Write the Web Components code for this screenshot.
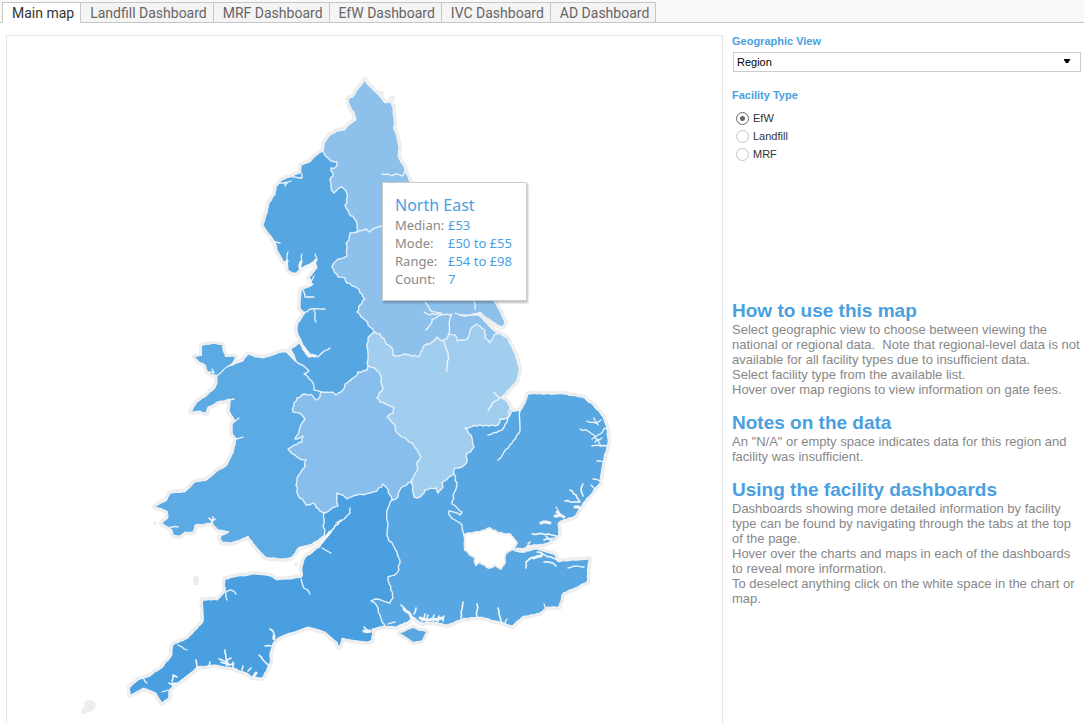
<!DOCTYPE html>
<html lang="en">
<head>
<meta charset="utf-8">
<title>Gate fees dashboard</title>
<style>
	body{ margin:0; background:#fff; font-family:"Liberation Sans", Arial, sans-serif; }
</style>
</head>
<body>
<gate-fee-page>
	<tab-strip slot="tabs">
		<tab-item selected>Main map</tab-item>
		<tab-item>Landfill Dashboard</tab-item>
		<tab-item>MRF Dashboard</tab-item>
		<tab-item>EfW Dashboard</tab-item>
		<tab-item>IVC Dashboard</tab-item>
		<tab-item>AD Dashboard</tab-item>
	</tab-strip>
	<region-map slot="map">
		<map-tooltip heading="North East" median="£53" mode="£50 to £55" range="£54 to £98" count="7"></map-tooltip>
	</region-map>
	<filter-select slot="side" label="Geographic View" options="Region,National"></filter-select>
	<filter-radios slot="side" label="Facility Type" options="EfW,Landfill,MRF"></filter-radios>
	<help-notes slot="side">
		<help-section heading="How to use this map">
			<div>Select geographic view to choose between viewing the national or regional data.&nbsp; Note that regional-level data is not available for all facility types due to insufficient data.</div>
			<div>Select facility type from the available list.</div>
			<div>Hover over map regions to view information on gate fees.</div>
		</help-section>
		<help-section heading="Notes on the data">
			<div>An "N/A" or empty space indicates data for this region and facility was insufficient.</div>
		</help-section>
		<help-section heading="Using the facility dashboards">
			<div>Dashboards showing more detailed information by facility type can be found by navigating through the tabs at the top of the page.</div>
			<div>Hover over the charts and maps in each of the dashboards to reveal more information.</div>
			<div>To deselect anything click on the white space in the chart or map.</div>
		</help-section>
	</help-notes>
</gate-fee-page>

<script>
class GateFeePage extends HTMLElement{
	constructor(){
		super();
		this.attachShadow({mode:'open'}).innerHTML = `
			<style>
				:host{ display:flex; flex-direction:column; height:100vh; overflow:hidden; }
				main{
					flex:1;
					min-height:0;
					display:grid;
					grid-template-columns:minmax(0, 1fr) 349px;
					gap:9px;
					padding:12px 3px 0 6px;
				}
				aside{ min-width:0; }
			</style>
			<slot name="tabs"></slot>
			<main>
				<slot name="map"></slot>
				<aside><slot name="side"></slot></aside>
			</main>
		`;
	}
}
customElements.define('gate-fee-page', GateFeePage);

class TabStrip extends HTMLElement{
	constructor(){
		super();
		this.attachShadow({mode:'open'}).innerHTML = `
			<style>
				:host{ display:block; padding-top:2px; background:#f9f9f9; }
				nav{ display:flex; height:21px; padding-left:2px; box-shadow:inset 0 -1px #c6c6c6; }
			</style>
			<nav role="tablist"><slot></slot></nav>
		`;
	}
}
customElements.define('tab-strip', TabStrip);

class TabItem extends HTMLElement{
	constructor(){
		super();
		this.attachShadow({mode:'open'}).innerHTML = `
			<style>
				:host{ display:flex; }
				button{
					box-sizing:border-box;
					margin:0;
					padding:0 6px 0 9px;
					border:1px solid #c6c6c6;
					border-right:0;
					background:#f4f4f4;
					color:#666;
					font:14px/18px Roboto, sans-serif;
					white-space:nowrap;
					cursor:pointer;
				}
				:host(:last-child) button{ border-right:1px solid #c6c6c6; }
				:host([selected]) button{ background:#fff; border-bottom-color:#fff; color:#333; }
			</style>
			<button type="button" role="tab"><slot></slot></button>
		`;
		this.shadowRoot.querySelector('button').setAttribute('aria-selected', this.hasAttribute('selected'));
	}
}
customElements.define('tab-item', TabItem);

class FilterSelect extends HTMLElement{
	constructor(){
		super();
		const options = this.getAttribute('options').split(',').map(o => `<option>${o}</option>`).join('');
		this.attachShadow({mode:'open'}).innerHTML = `
			<style>
				:host{ display:block; font-size:11px; }
				label{ display:block; line-height:13px; font-weight:bold; color:#4a9fe0; }
				.box{ display:grid; align-items:center; margin:4px 0 17px 1px; }
				select, svg{ grid-area:1 / 1; }
				select{
					appearance:none;
					box-sizing:border-box;
					width:100%;
					height:20px;
					margin:0;
					padding:0 20px 0 3px;
					border:1px solid #ccc;
					border-radius:0;
					background:#fff;
					color:#000;
					font:inherit;
				}
				svg{ justify-self:end; margin-right:10px; pointer-events:none; }
			</style>
			<label for="pick">${this.getAttribute('label')}</label>
			<div class="box">
				<select id="pick">${options}</select>
				<svg width="8" height="6" viewBox="0 0 8 6" aria-hidden="true"><path d="M1 0h6v1L5 4H3L1 1z" fill="#000"/></svg>
			</div>
		`;
	}
}
customElements.define('filter-select', FilterSelect);

class FilterRadios extends HTMLElement{
	constructor(){
		super();
		const rows = this.getAttribute('options').split(',').map((o, i) => `
			<label><input type="radio" name="type" value="${o}" ${i ? '' : 'checked'}>${o}</label>`).join('');
		this.attachShadow({mode:'open'}).innerHTML = `
			<style>
				:host{ display:block; font-size:11px; color:#333; }
				fieldset{ margin:0; padding:0; border:0; }
				legend{ padding:0; margin-bottom:7px; line-height:13px; font-weight:bold; color:#4a9fe0; }
				label{ display:flex; align-items:center; gap:4px; height:18px; padding-left:4px; }
				input{
					appearance:none;
					box-sizing:border-box;
					width:13px;
					height:13px;
					margin:0;
					border:1px solid #c4c4c4;
					border-radius:50%;
					background:#fff;
				}
				input:checked{ border-color:#666; background:radial-gradient(circle, #666 0 2px, #fff 3px); }
			</style>
			<fieldset><legend>${this.getAttribute('label')}</legend>${rows}</fieldset>
		`;
	}
}
customElements.define('filter-radios', FilterRadios);

class HelpNotes extends HTMLElement{
	constructor(){
		super();
		this.attachShadow({mode:'open'}).innerHTML = `
			<style>
				:host{ display:flex; flex-direction:column; gap:15px; margin-top:137px; }
			</style>
			<slot></slot>
		`;
	}
}
customElements.define('help-notes', HelpNotes);

class HelpSection extends HTMLElement{
	constructor(){
		super();
		this.attachShadow({mode:'open'}).innerHTML = `
			<style>
				:host{ display:block; font-size:13px; line-height:15px; color:#888; }
				h2{ margin:0; font-size:19px; line-height:22px; color:#4a9fe0; }
			</style>
			<h2>${this.getAttribute('heading')}</h2>
			<slot></slot>
		`;
	}
}
customElements.define('help-section', HelpSection);

class MapTooltip extends HTMLElement{
	constructor(){
		super();
		const rows = ['Median', 'Mode', 'Range', 'Count'].map(k => `
			<dt>${k}:</dt><dd>${this.getAttribute(k.toLowerCase())}</dd>`).join('');
		this.attachShadow({mode:'open'}).innerHTML = `
			<style>
				:host{
					display:block;
					position:absolute;
					left:375px;
					top:146px;
					padding:12px 14px 12px 12px;
					border:1px solid #ccc;
					background:#fff;
					box-shadow:1px 2px 2px rgba(0,0,0,.25);
					font:13px/18px "Noto Sans", sans-serif;
					color:#888;
				}
				h3{ margin:0; font-size:16px; line-height:21px; font-weight:normal; }
				dl{ margin:0; display:grid; grid-template-columns:50px auto; column-gap:3px; white-space:nowrap; }
				dd{ margin:0; }
				h3, dd{ color:#4a9fe0; }
			</style>
			<h3>${this.getAttribute('heading')}</h3>
			<dl>${rows}</dl>
		`;
	}
}
customElements.define('map-tooltip', MapTooltip);

// Each arc is drawn once and shared by the regions on both sides of it.
const COAST = {
	ne: '323,151 325,142 329,136 337,131 345,130 349,125 356,120 354,112 350,106 348,99 353,97 357,90 363,83 365,80 367,84 374,91 382,99 385,103 390,102 393,108 394,120 394,130 397,138 399,148 398,156 403,165 406,173 409,180 420,200 440,225',
	yh: '440,225 470,270 494,302 501,313 505,323 502,327 495,323 487,318 480,312 470,315 463,315 455,313 463,316 478,315 485,322 493,330 498,333',
	em: '498,333 507,338 514,352 519,367 519,372 517,380 508,390 501,398 507,402 510,408 512,411',
	east: '512,411 520,411 525,403 528,394 563,394 582,397 593,405 603,417 607,428 608,443 603,462 600,483 587,498 580,508 575,516 563,520 558,523 559,535 548,543 537,545 528,545 523,549 513,548',
	se: '513,548 523,552 537,549 555,555 558,562 573,560 589,559 588,567 587,582 575,588 563,593 559,607 547,607 540,613 522,617 512,626 500,622 480,617 462,619 447,625 433,622 422,623 413,617 408,622 397,627 385,626',
	sw: '385,626 372,629 372,640 367,642 342,638 339,647 337,642 325,632 309,627 290,633 278,638 273,643 270,653 270,663 262,678 252,677 247,673 233,668 213,665 197,667 188,675 177,683 169,690 169,697 162,703 156,693 143,688 130,695 130,687 138,680 148,677 163,667 172,655 173,645 188,638 203,622 203,600 217,600 225,592 225,579 253,574 270,576 277,580 290,579 302,577 302,567 305,558 313,552 320,547 324,536',
	wales: '298,363 292,358 286,352 282,352 273,355 263,358 255,357 248,354 243,361 233,365 227,367 217,376 217,383 215,388 205,397 197,402 191,412 200,411 206,413 208,407 217,402 230,399 230,402 229,410 235,421 232,425 232,432 236,439 233,453 227,465 215,473 207,480 195,482 185,492 170,493 167,500 155,507 167,511 168,518 162,523 172,530 173,535 180,536 185,532 193,532 195,525 212,523 218,530 229,532 220,537 222,542 230,543 240,540 248,536 257,548 265,557 282,559 292,557 298,548 312,544 324,536',
	nw: '298,363 295,358 291,349 300,343 303,350 310,357 316,356 310,354 303,345 300,338 297,330 298,323 305,313 300,308 301,290 312,285 309,278 317,268 315,262 308,265 301,268 296,273 291,272 288,270 287,263 283,261 280,255 277,250 275,242 270,235 263,225 267,213 269,203 275,195 276,187 282,180 290,177 301,173 301,165 310,162 317,155 323,151'
};

const BORDERS = {
	nwNe: '323,151 327,157 331,161 337,162 336,167 331,168 333,176 330,180 331,187 334,193 337,190 342,187 347,194 347,203 345,205 349,213 356,221 357,227 357,232',
	neYh: '357,232 366,229 370,232 375,228 378,227 382,226 410,230 440,225',
	nwYh: '357,232 350,233 349,240 346,243 347,248 347,256 338,259 333,264 332,267 338,277 345,278 347,283 357,288 365,299 360,305 357,312 361,317 365,320 374,332',
	nwEm: '374,332 368,338 367,347 368,353 367,363 368,366',
	nwWm: '368,366 367,370 358,372 353,378 345,384 343,390 336,395 332,392 321,392',
	nwWales: '321,392 314,390 313,383 308,377 304,374 309,371 304,366 298,363',
	walesWm: '321,392 320,397 317,400 313,396 305,394 297,398 294,403 293,412 302,415 305,419 302,423 299,432 295,439 303,436 302,442 294,445 288,449 295,455 300,459 306,460 305,467 302,470 297,478 296,485 298,495 306,505 313,503 320,511 324,513',
	walesSw: '324,513 324,523 324,536',
	wmSw: '324,513 330,510 338,506 337,493 343,495 347,499 357,495 370,493 377,491 383,484 387,488 390,495 392,500',
	swSe: '392,500 388,508 387,520 388,538 397,552 400,563 397,573 388,577 391,587 393,598 390,603 378,599 371,601 377,606 380,615 382,622 385,626',
	wmSe: '392,500 398,497 401,488 408,483 412,480',
	wmEm: '368,366 375,368 379,372 383,388 377,398 380,402 394,407 393,413 387,417 395,425 397,433 412,443 417,450 421,457 417,462 418,468 412,480',
	emSe: '412,480 413,487 414,497 420,497 425,490 436,488 438,493 443,487 442,483 454,474',
	emEast: '454,474 455,468 462,467 467,462 466,456 474,447 471,435 465,428 477,426 498,425 500,419 507,418 512,411',
	emYh: '374,332 380,334 385,342 391,347 393,355 398,356 405,354 418,357 425,345 430,344 437,337 442,341 447,339 449,334 455,335 457,341 467,339 470,330 477,324 485,330 485,338 490,343 494,335 498,333',
	eastSe: '454,474 457,483 454,493 452,504 462,512 460,515 449,511 450,516 455,520 462,525 464,535'
};

// London has no data and stays white, but keeps its coast-like edge.
const LONDON = {
	eastLondon: '464,535 473,533 480,532 490,528 498,533 510,534 517,543 513,548',
	londonSe: '464,535 465,550 475,558 476,565 480,562 489,568 495,565 501,569 505,562 506,553 513,548'
};

const REGIONS = [
	{ name:'North East', fill:'#8dc1ec', arcs:['ne', 'neYh', 'nwNe'] },
	{ name:'Yorkshire and The Humber', fill:'#8dc1ec', arcs:['neYh', 'yh', 'emYh', 'nwYh'] },
	{ name:'North West', fill:'#56a6e1', arcs:['nwNe', 'nwYh', 'nwEm', 'nwWm', 'nwWales', 'nw'] },
	{ name:'East Midlands', fill:'#a1ceee', arcs:['emYh', 'em', 'emEast', 'emSe', 'wmEm', 'nwEm'] },
	{ name:'West Midlands', fill:'#88beeb', arcs:['nwWm', 'walesWm', 'wmSw', 'wmSe', 'wmEm'] },
	{ name:'Wales', fill:'#5caae3', arcs:['wales', 'walesSw', 'walesWm', 'nwWales'] },
	{ name:'East of England', fill:'#58a7e2', arcs:['emEast', 'east', 'eastLondon', 'eastSe'] },
	{ name:'South East', fill:'#58a7e2', arcs:['emSe', 'eastSe', 'londonSe', 'se', 'swSe', 'wmSe'] },
	{ name:'South West', fill:'#4a9fe0', arcs:['swSe', 'sw', 'walesSw', 'wmSw'] }
];

const ISLANDS = [
	{ fill:'#5caae3', points:'202,346 212,344 222,345 223,352 225,357 235,357 232,363 225,368 217,375 208,372 206,365 200,362 195,357 202,356' },
	{ fill:'#58a7e2', points:'400,633 406,631 413,628 419,631 426,632 422,640 414,642 408,638' }
];

// River mouths and inlets, grouped by line width.
const INLETS = [
	{ width:1.3, lines:[
		'382,174 388,174 392,176 397,174 402,176 405,171', '280,183 286,182 285,186', '286,184 291,181',
		'293,177 302,178 302,174', '275,242 280,243', '318,357 323,352 330,348', '303,290 305,297 314,297',
		'305,312 312,309 325,309', '314,310 316,322', '425,302 430,310 438,313 444,315 452,314',
		'424,312 430,315 441,313', '442,315 432,319 431,324 426,330', '474,301 475,309', '451,315 449,323 449,334',
		'444,341 448,353 447,371', '494,392 500,398 492,403 488,411', '510,409 507,422 502,430 488,435',
		'520,411 520,431 512,443 498,460', '208,372 214,373 212,369',
		'587,421 595,423 601,420', '594,418 598,425', '580,429 588,431 594,435 601,446', '592,439 600,434 605,428 608,430',
		'592,446 601,446 607,446', '595,442 602,438', '597,461 604,462', '593,479 600,481', '591,485 596,490',
		'568,568 576,566 584,567', '544,604 546,609', '505,624 507,619', '322,548 327,551 331,553',
		'301,579 303,586 310,594', '341,521 346,517 350,513 350,508', '178,645 182,647 187,650', '227,600 226,592 231,590 236,594',
		'265,646 272,646', '142,676 147,683', '162,692 168,690', '388,624 395,622',
		'229,401 234,399', '234,422 239,418', '236,439 243,437', '170,527 178,527'
	] },
	{ width:1.6, lines:[
		'583,484 581,490 583,496', '570,490 576,495 580,502', '565,501 579,502', '532,534 548,534 556,536',
		'544,540 553,538', '512,549 520,552 525,552', '526,568 526,562 531,558 540,556', '544,562 553,563 556,566',
		'461,618 462,609 463,602', '477,617 477,604', '502,623 499,614 498,608', '274,638 273,631 270,629', '259,655 265,662 269,665',
		'304,347 308,354 317,356', '309,286 313,284', '528,544 530,542', '542,555 536,557 529,559', '546,536 552,541',
		'172,681 173,675 177,677', '169,683 174,686', '226,665 226,658 225,650', '219,659 226,662 231,658', '221,662 229,665 234,664',
		'233,668 233,662', '242,670 243,666', '197,667 196,660', '209,666 210,662',
		'248,671 251,668', '212,523 213,517', '209,518 212,521 215,519',
		'404,608 401,605', '414,614 416,608', '397,627 405,623 412,620',
		'422,621 425,614', '427,622 428,615', '433,621 434,615', '438,622 439,616', '443,621 444,616',
		'364,627 370,632', '328,535 334,528 341,520', '558,560 553,558 537,552'
	] },
	{ width:3, lines:[
		'287,261 286,265', '301,262 300,268', '316,260 310,265 302,270', '310,280 308,284', '303,348 309,356 315,356',
		'541,523 546,522 550,523', '555,516 560,515 564,517', '557,512 559,514', '534,558 541,556',
		'320,544 326,537 330,532', '172,684 176,684', '226,662 228,664', '254,676 256,673',
		'404,609 410,614 413,619', '420,618 430,620 442,618', '364,631 370,631', '274,639 274,636', '575,507 580,508'
	] },
	{ width:1.2, lines:['288,252 287,259 286,263', '302,254 301,263', '315,254 317,259', '314,276 311,282', '556,507 560,514', '341,521 336,523'] }
];

const toPoints = text => text.split(' ').map(p => p.split(',').map(Number));

// Splits long segments and nudges the new points sideways, for a surveyed look.
function roughen(points, amount){
	const out = [points[0]];
	for(let i = 1; i < points.length; i++){
		const [x1, y1] = points[i - 1];
		const [x2, y2] = points[i];
		const length = Math.hypot(x2 - x1, y2 - y1);
		const steps = Math.max(1, Math.round(length / 3));
		for(let s = 1; s < steps; s++){
			const t = s / steps;
			const seed = Math.sin(x1 * 12.9 + y1 * 78.2 + s * 37.7) * 43758.5;
			const shift = (seed - Math.floor(seed) - .5) * 2 * amount;
			out.push([
				x1 + (x2 - x1) * t - (y2 - y1) / length * shift,
				y1 + (y2 - y1) * t + (x2 - x1) / length * shift
			]);
		}
		out.push([x2, y2]);
	}
	return out;
}

const line = points => points.map(([x, y]) => `${x.toFixed(1)} ${y.toFixed(1)}`).join('L');

class RegionMap extends HTMLElement{
	constructor(){
		super();
		this.attachShadow({mode:'open'}).innerHTML = `
			<style>
				:host{
					display:block;
					position:relative;
					overflow:hidden;
					border:1px solid #e4e4e4;
					border-bottom:0;
				}
				svg{ display:block; width:100%; height:auto; }
				path{ stroke-linejoin:round; stroke-linecap:round; }
				.halo{ fill:#eee; stroke:#eee; stroke-width:6; }
				.edge{ fill:none; stroke:#efefef; stroke-width:2; }
				.coast{ fill:none; stroke:#f4f6f8; stroke-width:1; }
				.border{ fill:none; stroke:#e3f0fb; stroke-width:1.4; }
				.inlet{ fill:none; stroke:#f0f6fb; }
			</style>
			<svg viewBox="7 36 715 687" role="img" aria-label="Gate fees by region">${this.#draw()}</svg>
			<slot></slot>
		`;
	}
	#draw(){
		const arcs = {};
		for(const [name, text] of Object.entries(COAST)) arcs[name] = roughen(toPoints(text), .5);
		for(const [name, text] of Object.entries(BORDERS)) arcs[name] = roughen(toPoints(text), 1);
		for(const [name, text] of Object.entries(LONDON)) arcs[name] = roughen(toPoints(text), .8);

		const shapes = REGIONS.map(r => ({ ...r, d:this.#ring(r.arcs, arcs) }));
		for(const i of ISLANDS) shapes.push({ fill:i.fill, d:`M${line(roughen(toPoints(i.points), .5))}Z` });

		const london = [...arcs.eastLondon, ...[...arcs.londonSe].reverse()];
		return [
			...shapes.map(s => `<path class="halo" d="${s.d}"/>`),
			`<path d="M${line(london)}Z" fill="#fff"/>`,
			...shapes.map(s => `<path fill="${s.fill}" d="${s.d}">${s.name ? `<title>${s.name}</title>` : ''}</path>`),
			`<path class="edge" d="M${line(london)}Z"/>`,
			...Object.keys(COAST).map(k => `<path class="coast" d="M${line(arcs[k])}"/>`),
			...Object.keys(BORDERS).map(k => `<path class="border" d="M${line(arcs[k])}"/>`),
			...INLETS.flatMap(g => g.lines.map(l =>
				`<path class="inlet" stroke-width="${g.width}" d="M${line(roughen(toPoints(l), .8))}"/>`)),
			// Lundy, Skomer, Flat Holm, the Farne Islands and Scilly
			`<g fill="#eee">
				<rect x="193" y="576" width="6" height="9" rx="2"/>
				<circle cx="155" cy="523" r="2"/><circle cx="296" cy="564" r="2"/><circle cx="301" cy="565" r="2"/>
				<circle cx="381" cy="94" r="3"/><circle cx="392" cy="98" r="3"/>
				<path d="M84 703q3-4 8-3q6 3 3 8q-3 4-7 4q-4 4-7 1q-1-4 3-5z"/>
			</g>
			<circle cx="196" cy="581" r="1" fill="#d5e8f7"/>
			<path fill="none" stroke="#dcebf8" d="M87 704l2 2l2-2M92 707l-1 2"/>`
		].join('');
	}
	#ring(names, arcs){
		// Arcs are chained end to end; one that ends at the join is walked backwards.
		const same = (a, b) => a[0] === b[0] && a[1] === b[1];
		const left = names.map(n => arcs[n]);
		const ring = [...left.shift()];
		while(left.length){
			const end = ring[ring.length - 1];
			const at = left.findIndex(a => same(a[0], end) || same(a[a.length - 1], end));
			if(at < 0) break;
			const next = left.splice(at, 1)[0];
			ring.push(...(same(next[0], end) ? next : [...next].reverse()).slice(1));
		}
		return `M${line(ring)}Z`;
	}
}
customElements.define('region-map', RegionMap);
</script>
</body>
</html>
